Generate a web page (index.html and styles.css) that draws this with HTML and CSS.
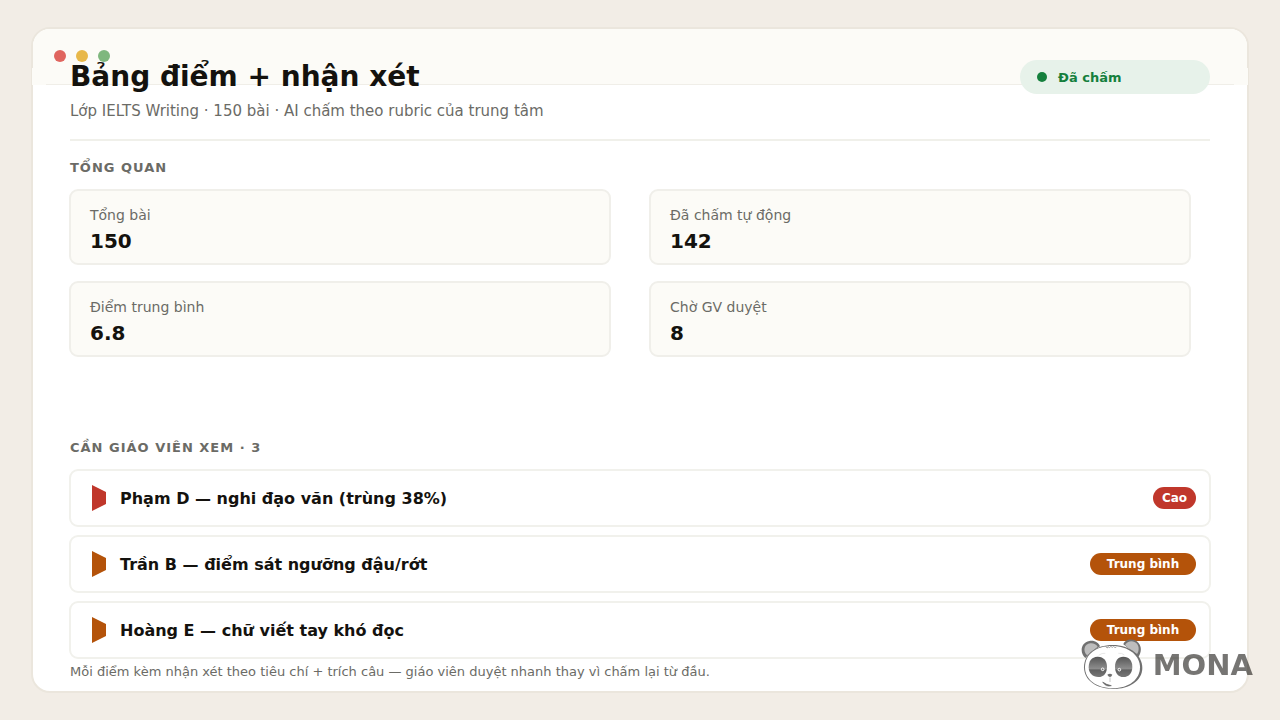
FILE: index.html
```html
<!DOCTYPE html>
<html lang="vi">
<head>
    <meta charset="UTF-8">
    <meta name="viewport" content="width=device-width, initial-scale=1.0">
    <title>Bảng điểm + nhận xét</title>
    <link rel="stylesheet" href="styles.css">
</head>
<body>
    <main class="window">
        <div class="titlebar">
            <span class="dot dot-red"></span>
            <span class="dot dot-yellow"></span>
            <span class="dot dot-green"></span>
        </div>

        <header class="header">
            <div>
                <h1>Bảng điểm + nhận xét</h1>
                <p class="subtitle">Lớp IELTS Writing · 150 bài · AI chấm theo rubric của trung tâm</p>
            </div>
            <div class="status">Đã chấm</div>
        </header>

        <section>
            <h2>TỔNG QUAN</h2>
            <dl class="stats">
                <div class="stat">
                    <dt>Tổng bài</dt>
                    <dd>150</dd>
                </div>
                <div class="stat">
                    <dt>Đã chấm tự động</dt>
                    <dd>142</dd>
                </div>
                <div class="stat">
                    <dt>Điểm trung bình</dt>
                    <dd>6.8</dd>
                </div>
                <div class="stat">
                    <dt>Chờ GV duyệt</dt>
                    <dd>8</dd>
                </div>
            </dl>
        </section>

        <section class="review">
            <h2>CẦN GIÁO VIÊN XEM · 3</h2>
            <ul class="alerts">
                <li class="alert high">
                    <span class="flag"></span>
                    <span class="alert-text">Phạm D — nghi đạo văn (trùng 38%)</span>
                    <span class="badge">Cao</span>
                </li>
                <li class="alert medium">
                    <span class="flag"></span>
                    <span class="alert-text">Trần B — điểm sát ngưỡng đậu/rớt</span>
                    <span class="badge">Trung bình</span>
                </li>
                <li class="alert medium">
                    <span class="flag"></span>
                    <span class="alert-text">Hoàng E — chữ viết tay khó đọc</span>
                    <span class="badge">Trung bình</span>
                </li>
            </ul>
        </section>

        <footer class="note">Mỗi điểm kèm nhận xét theo tiêu chí + trích câu — giáo viên duyệt nhanh thay vì chấm lại từ đầu.</footer>
    </main>

    <div class="brand">
        <svg class="panda" viewBox="30 27 192 153" aria-hidden="true">
            <defs>
                <linearGradient id="eye" x1="0" y1="0" x2="0" y2="1">
                    <stop offset="0" stop-color="#555"/>
                    <stop offset="0.6" stop-color="#8e8e8e"/>
                    <stop offset="0.65" stop-color="#606060"/>
                    <stop offset="1" stop-color="#777"/>
                </linearGradient>
            </defs>
            <!-- ears -->
            <path d="M46 84C28 68 32 38 58 33c16-3 29 6 32 16L60 70z" fill="#707070"/>
            <path d="M51 76C37 62 43 42 61 40c10-1 18 4 22 10L60 70z" fill="#bdbdbd"/>
            <path d="M160 43c4-16 32-20 45-5 11 12 9 30 0 43L182 60z" fill="#707070"/>
            <path d="M165 45c7-14 27-15 36-4 7 9 6 22 0 31L182 60z" fill="#bdbdbd"/>
            <!-- face -->
            <path d="M128 45c52 0 89 31 89 69 0 38-39 63-87 63-52 0-88-27-88-65 0-41 36-67 86-67z" fill="#707070"/>
            <path d="M126 48c50 0 84 29 84 64 0 37-34 63-81 63-50 0-84-26-84-63 0-39 33-64 81-64z" fill="#fff"/>
            <path d="M107 50l5 4 2-4 5 3 3-4 5 3 4-3 4 4 4-2" fill="none" stroke="#777" stroke-width="2"/>
            <path d="M86 76q10-8 20-6M145 70q10-2 18 5" fill="none" stroke="#ddd" stroke-width="2"/>
            <!-- eyes -->
            <path d="M82 80c18-1 29 12 29 30 0 19-9 31-26 31-17 0-29-11-29-29 0-19 9-31 26-32z" fill="url(#eye)"/>
            <path d="M160 80c17 0 27 12 27 30s-10 31-27 31c-16 0-25-12-25-31 0-18 9-30 25-30z" fill="url(#eye)"/>
            <g fill="#777" stroke="#fff" stroke-width="3">
                <circle cx="98" cy="118" r="4"/>
                <circle cx="148" cy="119" r="4"/>
            </g>
            <!-- nose and mouth -->
            <path d="M112 134q8-5 15 0-3 7-7 7t-8-7z" fill="#707070"/>
            <path d="M120 142v14" stroke="#aaa" stroke-width="2"/>
            <path d="M98 156q12 9 26 11-16 5-26-11z" fill="#666" stroke="#666" stroke-width="2"/>
        </svg>
        <span class="brand-name">MONA</span>
    </div>
</body>
</html>
```
FILE: styles.css
```css
* {
    box-sizing: border-box;
}

body {
    font-family: 'DejaVu Sans', sans-serif;
    background-color: #f2ede6;
    color: #14120e;
    margin: 0;
    padding: 27px 31px;
    display: flex;
    min-height: 100vh;
}

h1, h2, p, dl, dd, ul {
    margin: 0;
    padding: 0;
}

.window {
    position: relative;
    flex: 1;
    display: flex;
    flex-direction: column;
    padding: 31px 37px 9px;
    background-color: #fff;
    border: 2px solid #ebe6dd;
    border-radius: 19px;
}

/* Title bar lies behind the page heading */
.titlebar {
    position: absolute;
    top: 0;
    left: 0;
    right: 0;
    height: 56px;
    display: flex;
    gap: 10px;
    padding: 21px;
    background-color: #fcfbf7;
    border-bottom: 1px solid #f0eee8;
    border-radius: 17px 17px 0 0;
}

.titlebar::after {
    content: "";
    position: absolute;
    left: -1px;
    right: -1px;
    bottom: -1px;
    height: 17px;
    border: solid #fcfbf7;
    border-width: 0 14px;
}

.dot {
    width: 12px;
    height: 12px;
    border-radius: 50%;
}

.dot-red {
    background-color: #e0655f;
}

.dot-yellow {
    background-color: #e8b84a;
}

.dot-green {
    background-color: #7fb77e;
}

.header {
    position: relative;
    display: flex;
    justify-content: space-between;
    align-items: flex-start;
    padding-bottom: 17px;
    border-bottom: 2px solid #f0f0ea;
}

h1 {
    font-size: 28px;
    line-height: 34px;
}

.subtitle {
    margin-top: 6px;
    font-size: 15px;
    line-height: 22px;
    color: #6b6b66;
}

.status {
    display: flex;
    align-items: center;
    gap: 11px;
    width: 190px;
    height: 34px;
    padding: 0 17px;
    border-radius: 17px;
    background-color: #e7f2ea;
    color: #15803d;
    font-size: 13px;
    font-weight: bold;
}

.status::before {
    content: "";
    width: 10px;
    height: 10px;
    border-radius: 50%;
    background-color: #15803d;
}

h2 {
    margin: 17px 0 11px;
    font-size: 13px;
    line-height: 20px;
    letter-spacing: 1px;
    color: #6b6b66;
}

.stats {
    display: grid;
    grid-template-columns: 1fr 1fr;
    gap: 16px 38px;
    margin: 0 19px 0 -1px;
}

.stat {
    padding: 14px 19px 8px;
    border: 2px solid #f0efea;
    border-radius: 9px;
    background-color: #fcfbf7;
}

.stat dt {
    font-size: 14px;
    line-height: 20px;
    color: #6b6b66;
}

.stat dd {
    margin-top: 2px;
    font-size: 20px;
    line-height: 28px;
    font-weight: bold;
}

.review {
    margin-top: auto;
}

.alerts {
    display: grid;
    gap: 8px;
    margin: 0 -1px;
    list-style: none;
}

.alert {
    display: flex;
    align-items: center;
    gap: 14px;
    height: 58px;
    padding: 0 13px 0 21px;
    border: 2px solid #f1f1ec;
    border-radius: 9px;
}

.alert-text {
    flex: 1;
    font-size: 16px;
    font-weight: bold;
}

.flag {
    width: 14px;
    height: 26px;
    clip-path: polygon(0 0, 100% 27%, 100% 73%, 0 100%);
}

.badge {
    width: 106px;
    border-radius: 11px;
    color: #fff;
    font-size: 12px;
    line-height: 22px;
    font-weight: bold;
    text-align: center;
}

.high .badge {
    width: 43px;
}

.high .flag, .high .badge {
    background-color: #c0372b;
}

.medium .flag, .medium .badge {
    background-color: #b4530a;
}

.note {
    margin-top: 3px;
    font-size: 13px;
    line-height: 20px;
    color: #6b6b66;
}

/* Watermark over the bottom right corner */
.brand {
    position: fixed;
    right: 27px;
    bottom: 30px;
    display: flex;
    align-items: center;
    gap: 9px;
}

.panda {
    width: 64px;
    height: 51px;
}

.brand-name {
    font-size: 29px;
    line-height: 34px;
    font-weight: bold;
    color: #14120e;
    opacity: 0.58;
}
```
